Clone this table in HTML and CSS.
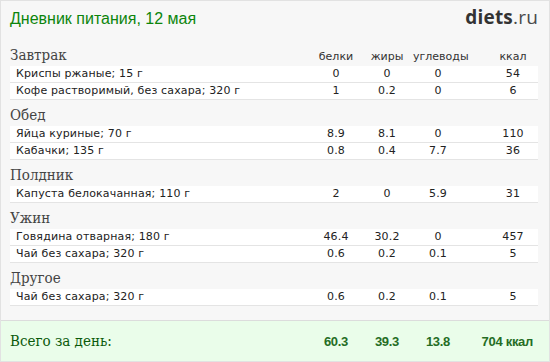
FILE: index.html
```html
<!DOCTYPE html>
<html lang="ru">
<head>
<meta charset="utf-8">
<title>Дневник питания</title>
<link rel="stylesheet" href="styles.css">
</head>
<body>
<div class="page">
  <header class="top">
    <h1 class="title">Дневник питания, 12 мая</h1>
    <div class="logo"><b>diets</b>.ru</div>
  </header>

  <section class="meal">
    <div class="grid meal-head">
      <h2 class="meal-name">Завтрак</h2>
      <span class="col">белки</span>
      <span class="col">жиры</span>
      <span class="col">углеводы</span>
      <span class="col kcal">ккал</span>
    </div>
    <div class="grid row"><span class="name">Криспы ржаные; 15 г</span><span class="num">0</span><span class="num">0</span><span class="num">0</span><span class="num kcal">54</span></div>
    <div class="grid row"><span class="name">Кофе растворимый, без сахара; 320 г</span><span class="num">1</span><span class="num">0.2</span><span class="num">0</span><span class="num kcal">6</span></div>
  </section>

  <section class="meal">
    <div class="grid meal-head"><h2 class="meal-name">Обед</h2></div>
    <div class="grid row"><span class="name">Яйца куриные; 70 г</span><span class="num">8.9</span><span class="num">8.1</span><span class="num">0</span><span class="num kcal">110</span></div>
    <div class="grid row"><span class="name">Кабачки; 135 г</span><span class="num">0.8</span><span class="num">0.4</span><span class="num">7.7</span><span class="num kcal">36</span></div>
  </section>

  <section class="meal">
    <div class="grid meal-head"><h2 class="meal-name">Полдник</h2></div>
    <div class="grid row"><span class="name">Капуста белокачанная; 110 г</span><span class="num">2</span><span class="num">0</span><span class="num">5.9</span><span class="num kcal">31</span></div>
  </section>

  <section class="meal">
    <div class="grid meal-head"><h2 class="meal-name">Ужин</h2></div>
    <div class="grid row"><span class="name">Говядина отварная; 180 г</span><span class="num">46.4</span><span class="num">30.2</span><span class="num">0</span><span class="num kcal">457</span></div>
    <div class="grid row"><span class="name">Чай без сахара; 320 г</span><span class="num">0.6</span><span class="num">0.2</span><span class="num">0.1</span><span class="num kcal">5</span></div>
  </section>

  <section class="meal">
    <div class="grid meal-head"><h2 class="meal-name">Другое</h2></div>
    <div class="grid row"><span class="name">Чай без сахара; 320 г</span><span class="num">0.6</span><span class="num">0.2</span><span class="num">0.1</span><span class="num kcal">5</span></div>
  </section>

  <footer class="grid total">
    <span class="total-label">Всего за день:</span>
    <span class="total-num">60.3</span>
    <span class="total-num">39.3</span>
    <span class="total-num">13.8</span>
    <span class="total-num total-kcal">704 ккал</span>
  </footer>
</div>
</body>
</html>
```

FILE: styles.css
```css
html, body {
  margin: 0;
  padding: 0;
  background: #ffffff;
}

.page {
  box-sizing: border-box;
  width: 550px;
  height: 362px;
  border: 1px solid #e2e2e2;
  background: #f7f7f7;
  display: flex;
  flex-direction: column;
  font-family: "DejaVu Sans", Verdana, sans-serif;
  color: #222;
}

.top {
  box-sizing: border-box;
  height: 39px;
  padding: 6px 11px 0 9px;
  display: flex;
  justify-content: space-between;
  align-items: baseline;
}

.title {
  margin: 0;
  font-family: "Liberation Sans", Arial, sans-serif;
  font-weight: normal;
  font-size: 16px;
  line-height: 20px;
  color: #0c850c;
}

.logo {
  font-family: "Open Sans", "Inter", sans-serif;
  font-size: 19px;
  line-height: 20px;
  color: #4a4a4a;
  letter-spacing: 0.2px;
}

.logo b {
  color: #333;
  font-weight: 700;
}

.grid {
  display: grid;
  grid-template-columns: 1fr 50px 52px 50px 75px;
}

.meal-head {
  box-sizing: border-box;
  height: 26px;
  margin: 0 11px 0 9px;
  padding-top: 5px;
  align-items: baseline;
}

.meal-name {
  margin: 0;
  font-family: "DejaVu Serif Condensed", "DejaVu Serif", "Liberation Serif", serif;
  font-stretch: condensed;
  font-weight: normal;
  font-size: 15px;
  line-height: 20px;
  color: #444;
}

.col {
  font-size: 11px;
  text-align: center;
  color: #333;
}

.kcal {
  padding-left: 25px;
}

.row {
  box-sizing: border-box;
  height: 17px;
  margin: 0 11px 0 9px;
  background: #ffffff;
  border-bottom: 1px solid #e4e4e4;
  font-size: 11px;
  line-height: 16px;
  letter-spacing: 0.15px;
  color: #222;
}

.name {
  padding-left: 6px;
  white-space: nowrap;
}

.num {
  text-align: center;
}

.total {
  box-sizing: border-box;
  margin-top: auto;
  height: 41px;
  padding: 0 11px 0 9px;
  border-top: 1px solid #dcdcdc;
  background: #eafdea;
  align-items: center;
}

.total-label {
  font-family: "DejaVu Serif Condensed", "DejaVu Serif", "Liberation Serif", serif;
  font-stretch: condensed;
  font-size: 15px;
  color: #0b5a0b;
}

.total-num {
  font-family: "Liberation Sans", Arial, sans-serif;
  font-weight: bold;
  font-size: 13px;
  letter-spacing: -0.3px;
  color: #256d25;
  text-align: center;
}

.total-kcal {
  text-align: right;
  padding-right: 5px;
}
```
